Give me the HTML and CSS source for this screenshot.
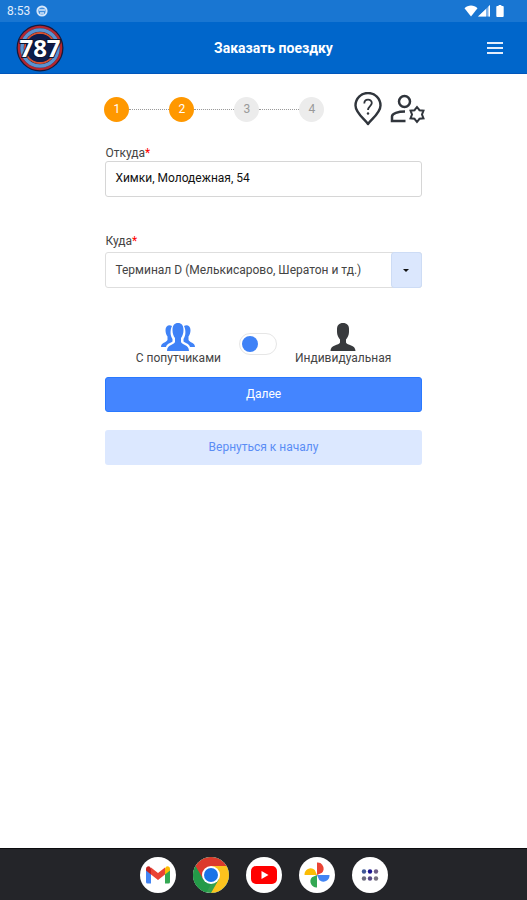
FILE: index.html
```
<!DOCTYPE html>
<html lang="ru">
<head>
    <meta charset="UTF-8">
    <meta name="viewport" content="width=device-width, initial-scale=1.0">
    <title>Заказать поездку</title>
    <link rel="stylesheet" href="styles.css">
</head>
<body>
    <div class="status-bar">
        <span class="status-time">8:53</span>
        <svg width="12" height="12" viewBox="0 0 12 12">
            <circle cx="6" cy="6" r="4.6" fill="#3f8fdf" stroke="#d5e6fa" stroke-width="2"/>
            <path d="M3 5h6M4 8h4" stroke="#d5e6fa" stroke-width="1.4"/>
        </svg>
        <div class="status-icons">
            <svg width="14" height="12" viewBox="0 0 14 12">
                <path d="M0.5 3.2C4-0.3 10-0.3 13.5 3.2L7 11.5z" fill="#fff"/>
            </svg>
            <svg width="12" height="12" viewBox="0 0 12 12">
                <path d="M0 11.5L12 0v11.5z" fill="#7fb2ea"/>
                <path d="M0 11.5L8 4v7.5zM10.5 1.5L12 0v11.5h-1.5z" fill="#fff"/>
            </svg>
            <svg class="battery" width="8" height="12" viewBox="0 0 8 13">
                <path d="M2.5 0h3v1H7a1 1 0 0 1 1 1v10a1 1 0 0 1-1 1H1a1 1 0 0 1-1-1V2a1 1 0 0 1 1-1h1.5z" fill="#fff"/>
            </svg>
        </div>
    </div>

    <header class="header">
        <svg class="logo" width="48" height="48" viewBox="0 0 48 48">
            <circle cx="24" cy="24" r="23.5" fill="#17193a"/>
            <circle cx="24" cy="24" r="21" fill="none" stroke="#b3262f" stroke-width="2.5"/>
            <circle cx="24" cy="24" r="18" fill="none" stroke="#5b93d0" stroke-width="3.5"/>
            <circle cx="24" cy="24" r="15" fill="none" stroke="#d5502f" stroke-width="2"/>
            <circle cx="24" cy="24" r="14" fill="#0c1c4c"/>
            <text class="logo-text" x="24" y="33" text-anchor="middle">787</text>
        </svg>
        <h1 class="title">Заказать поездку</h1>
        <button type="button" class="menu-button" aria-label="Меню">
            <svg width="16" height="12" viewBox="0 0 16 12">
                <path d="M0 1h16M0 6h16M0 11h16" stroke="#e4edfb" stroke-width="2"/>
            </svg>
        </button>
    </header>

    <main class="content">
        <div class="top-row">
            <ol class="steps">
                <li class="step active">1</li>
                <li class="step active">2</li>
                <li class="step">3</li>
                <li class="step">4</li>
            </ol>
            <div class="tools">
                <button type="button" class="icon-button" aria-label="Помощь">
                    <svg width="28" height="34" viewBox="0 0 28 34" fill="none" stroke="#30353c">
                        <path d="M14 32C10.5 27 1.500 21 1.500 13.500a12.500 12.500 0 0 1 25 0C26.500 21 17.500 27 14 32z" stroke-width="2.4" stroke-linejoin="round"/>
                        <path d="M10.300 11.500c0-5 7.500-5 7.500-.5 0 3-3.800 3.200-3.800 7" stroke-width="1.8"/>
                        <circle cx="14" cy="21.5" r="1.2" fill="#30353c" stroke="none"/>
                    </svg>
                </button>
                <button type="button" class="icon-button" aria-label="Профиль">
                    <svg width="36" height="30" viewBox="0 0 36 30" fill="none" stroke="#30353c" stroke-width="2.5">
                        <circle cx="14.5" cy="7.5" r="5.5"/>
                        <path d="M15 17.500C8 17.500 2 19.500 2 22.500V27h13.500"/>
                        <path d="M27 13l2.500 3.200 4 .5-1.500 3.800 1.500 3.800-4 .5L27 28l-2.500-3.200-4-.5 1.500-3.800-1.500-3.800 4-.5z" stroke-width="2"/>
                    </svg>
                </button>
            </div>
        </div>

        <form class="order-form">
            <label class="label" for="from">Откуда<span class="required">*</span></label>
            <input class="field" type="text" id="from" value="Химки, Молодежная, 54" required>

            <label class="label" for="to">Куда<span class="required">*</span></label>
            <div class="select-box">
                <select class="field" id="to" required>
                    <option>Терминал D (Мелькисарово, Шератон и тд.)</option>
                </select>
                <span class="select-arrow"></span>
            </div>

            <div class="ride-type">
                <label class="ride-option" for="ride-switch">
                    <svg width="36" height="28" viewBox="0 0 36 28" fill="#3f82f7">
                        <path d="M12 3C9 1 5.500 3 5.500 7c0 3 .8 5 2 6.500v3.500C6.500 19.500 1 19.500 1 24h5c.8-3.500 5-4 6.500-5.500V16C10 12.500 10 7 12 3z"/>
                        <path d="M24 3c3-2 6.500 0 6.500 4 0 3-.8 5-2 6.500v3.500c1 2.500 6.500 2.500 6.500 7h-5c-.8-3.500-5-4-6.500-5.500V16C26 12.500 26 7 24 3z"/>
                        <path d="M18 0c-3.500 0-5.500 2.500-5.500 7 0 3.500 1 6 2.500 8v4c-1 3-8 2.500-8 9h22c0-6.500-7-6-8-9v-4c1.500-2 2.500-4.500 2.500-8 0-4.500-2-7-5.500-7z"/>
                    </svg>
                    <span>С попутчиками</span>
                </label>
                <input class="switch" type="checkbox" id="ride-switch" aria-label="Индивидуальная поездка">
                <label class="ride-option" for="ride-switch">
                    <svg width="26" height="28" viewBox="0 0 26 28" fill="#383a3d">
                        <path d="M13 0C9 0 7 2.500 7 6v3c0 3 1.500 5.500 3 7.500v3C9 22.500 0.500 21.500 0.500 28h25c0-6.500-8.500-5.500-9.500-8.500v-3c1.500-2 3-4.500 3-7.500V6c0-3.500-2-6-6-6z"/>
                    </svg>
                    <span>Индивидуальная</span>
                </label>
            </div>

            <button type="submit" class="btn btn-primary">Далее</button>
            <button type="button" class="btn btn-light">Вернуться к началу</button>
        </form>
    </main>

    <nav class="dock">
        <a class="app" href="#" aria-label="Gmail">
            <svg width="24" height="20" viewBox="0 0 24 20">
                <path d="M0 4v13a1.500 1.500 0 0 0 1.500 1.500H5V8z" fill="#4285f4"/>
                <path d="M24 4v13a1.500 1.500 0 0 1-1.500 1.500H19V8z" fill="#34a853"/>
                <path d="M19 3.500V9.500l5-4V4c0-2.600-2.500-3.500-4-2.200z" fill="#fbbc04"/>
                <path d="M0 4v1.500l5 4V3.500L4 1.800C2.500.5 0 1.400 0 4z" fill="#c5221f"/>
                <path d="M5 9.500v-7L12 8l7-5.500v7L12 15z" fill="#ea4335"/>
            </svg>
        </a>
        <a class="app" href="#" aria-label="Chrome">
            <svg width="36" height="36" viewBox="0 0 36 36">
                <circle cx="18" cy="18" r="18" fill="#34a04f"/>
                <path d="M18 18L2.400 9A18 18 0 0 1 33.600 9z" fill="#dc3a2c"/>
                <path d="M18 9h15.600A18 18 0 0 1 18 36l7.800-13.500z" fill="#fcc31e"/>
                <path d="M2.400 9L10.200 22.500 18 18V9z" fill="#dc3a2c"/>
                <path d="M2.400 9l7.800 13.500L18 27l-5 9A18 18 0 0 1 2.400 9z" fill="#249a48"/>
                <circle cx="18" cy="18" r="9" fill="#fff"/>
                <circle cx="18" cy="18" r="7" fill="#1a73e8"/>
            </svg>
        </a>
        <a class="app" href="#" aria-label="YouTube">
            <svg width="26" height="18" viewBox="0 0 26 18">
                <rect width="26" height="18" rx="5" fill="#f00"/>
                <path d="M10.500 5v8l7-4z" fill="#fff"/>
            </svg>
        </a>
        <a class="app" href="#" aria-label="Фото">
            <svg width="26" height="26" viewBox="0 0 26 26">
                <path d="M13 13V0.500a6.200 6.200 0 0 1 5 10.300L13 13z" fill="#ea4335"/>
                <path d="M13 13h12.500a6.200 6.200 0 0 1-10.300 5z" fill="#4285f4"/>
                <path d="M13 13v12.500a6.200 6.200 0 0 1-5-10.300z" fill="#34a853"/>
                <path d="M13 13H0.500a6.200 6.200 0 0 1 10.300-5z" fill="#fbbc04"/>
            </svg>
        </a>
        <a class="app" href="#" aria-label="Все приложения">
            <svg width="18" height="12" viewBox="0 0 18 12">
                <circle cx="3" cy="2.5" r="2.2" fill="#3f5796"/>
                <circle cx="9" cy="2.5" r="2.2" fill="#1b1690"/>
                <circle cx="15" cy="2.5" r="2.2" fill="#6d5d86"/>
                <circle cx="3" cy="9.5" r="2.2" fill="#6b6b7c"/>
                <circle cx="9" cy="9.5" r="2.2" fill="#584a86"/>
                <circle cx="15" cy="9.5" r="2.2" fill="#77717f"/>
            </svg>
        </a>
    </nav>
</body>
</html>
```
FILE: styles.css
```
* {
    box-sizing: border-box;
}

body {
    margin: 0;
    min-height: 100vh;
    display: flex;
    flex-direction: column;
    font-family: Roboto, "Noto Sans", sans-serif;
    font-size: 12px;
    line-height: 16px;
    color: #444;
    background-color: #fff;
}

button, input, select {
    font: inherit;
}

svg {
    display: block;
}

.status-bar {
    display: flex;
    align-items: center;
    gap: 6px;
    height: 22px;
    padding: 0 23px 0 7px;
    background-color: #1976d2;
    color: #e1edfb;
}

.status-icons {
    display: flex;
    align-items: center;
    margin-left: auto;
}

.battery {
    margin-left: 6px;
}

.header {
    display: grid;
    grid-template-columns: 48px 1fr 28px;
    align-items: center;
    height: 52px;
    padding: 0 16px;
    background-color: #0066cb;
    border-bottom: 1px solid #0056bb;
}

.logo-text {
    font-family: "Open Sans", sans-serif;
    font-size: 24px;
    font-weight: 700;
    fill: #fff;
    stroke: #0b1330;
    stroke-width: 2px;
    paint-order: stroke;
}

.title {
    margin: 0;
    font-size: 14px;
    font-weight: 700;
    text-align: center;
    color: #fff;
}

.menu-button {
    justify-self: end;
    padding: 8px;
    border: none;
    background: none;
    cursor: pointer;
}

.content {
    flex: 1;
    width: 60%;
    margin: 0 auto;
    padding-top: 18px;
}

.top-row {
    display: flex;
    align-items: center;
    justify-content: space-between;
    margin: 0 -4px 0 -1px;
}

.steps {
    display: flex;
    margin: 0;
    padding: 0;
    list-style: none;
}

.step {
    display: flex;
    align-items: center;
    justify-content: center;
    width: 25px;
    height: 25px;
    border-radius: 50%;
    background-color: #ececec;
    color: #999;
}

.step.active {
    background-color: #ff9800;
    color: #fff;
}

/* dotted line between steps */
.step + .step {
    position: relative;
    margin-left: 40px;
}

.step + .step::before {
    content: "";
    position: absolute;
    right: 100%;
    width: 40px;
    border-top: 1px dotted #999;
}

.tools {
    display: flex;
    align-items: center;
    gap: 8px;
}

.icon-button {
    padding: 0;
    border: none;
    background: none;
    cursor: pointer;
}

.order-form {
    display: flex;
    flex-direction: column;
    padding-top: 19px;
}

.label {
    color: #444;
}

.required {
    color: #f00;
}

.field {
    width: 100%;
    height: 36px;
    padding: 0 9px;
    border: 1px solid #d6d6d6;
    border-radius: 3px;
    background-color: #fff;
    color: #111;
}

input.field {
    margin-bottom: 36px;
    padding-bottom: 2px;
}

.select-box {
    position: relative;
    margin-top: 3px;
}

select.field {
    display: block;
    appearance: none;
    border-color: #dedede;
    padding-right: 34px;
    color: #444;
    opacity: 1;
}

.select-arrow {
    position: absolute;
    top: 0;
    right: 0;
    bottom: 0;
    display: flex;
    align-items: center;
    justify-content: center;
    width: 31px;
    border: 1px solid #cddcf5;
    border-radius: 3px;
    background-color: #dbe7fd;
    pointer-events: none;
}

.select-arrow::before {
    content: "";
    border: 3px solid transparent;
    border-top-color: #111;
    border-bottom: none;
}

.ride-type {
    display: flex;
    align-items: center;
    justify-content: center;
    gap: 18px;
    margin: 35px 0 12px;
}

.ride-option {
    display: flex;
    flex-direction: column;
    align-items: center;
    line-height: 14px;
    cursor: pointer;
}

.switch {
    appearance: none;
    display: flex;
    align-items: center;
    width: 38px;
    height: 22px;
    margin: 0;
    padding: 0 2px;
    border: 1px solid #e6e6e6;
    border-radius: 11px;
    background-color: #fff;
    cursor: pointer;
}

.switch::before {
    content: "";
    width: 16px;
    height: 16px;
    border-radius: 50%;
    background-color: #3f82f7;
}

.switch:checked {
    justify-content: flex-end;
}

.btn {
    height: 35px;
    padding: 0 9px 2px;
    border: 1px solid transparent;
    border-radius: 3px;
    cursor: pointer;
}

.btn-primary {
    margin-bottom: 18px;
    border-color: #2979ff;
    background-color: #4485ff;
    color: #fff;
}

.btn-light {
    background-color: #dce8ff;
    color: #5b8df5;
}

.dock {
    display: flex;
    align-items: center;
    justify-content: center;
    gap: 17px;
    height: 52px;
    background-color: #242529;
    border-top: 1px solid #0c0c0e;
}

.app {
    display: flex;
    align-items: center;
    justify-content: center;
    width: 36px;
    height: 36px;
    border-radius: 50%;
    background-color: #fff;
    overflow: hidden;
}
```
